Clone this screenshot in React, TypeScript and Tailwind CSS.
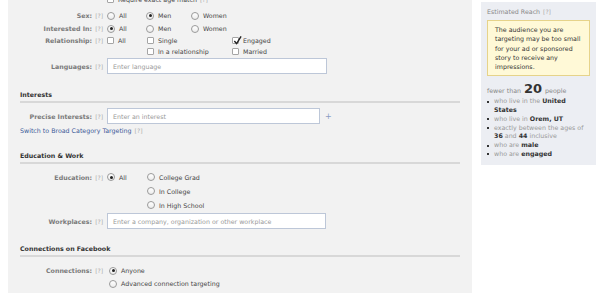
import type { ReactNode } from "react";

const FONT = { fontFamily: '"DejaVu Sans", "Liberation Sans", sans-serif' };

function Help() {
  return <span className="ml-[3px] text-[6px] text-[#aaa]">[?]</span>;
}

function Radio({ checked = false, label, w }: { checked?: boolean; label: string; w?: string }) {
  return (
    <span className={`flex items-center gap-[4px] ${w ?? ""}`}>
      <span className="flex h-[8px] w-[8px] shrink-0 items-center justify-center rounded-full border border-[#9a9a9a] bg-gradient-to-b from-white to-[#ececec]">
        {checked && <span className="h-[3px] w-[3px] rounded-full bg-[#222]" />}
      </span>
      <span className="text-[#444]">{label}</span>
    </span>
  );
}

function Check({ checked = false, label, w }: { checked?: boolean; label: string; w?: string }) {
  return (
    <span className={`flex items-center gap-[4px] ${w ?? ""}`}>
      <span className="relative flex h-[7px] w-[7px] shrink-0 items-center justify-center rounded-[1px] border border-[#a5a5a5] bg-white">
        {checked && (
          <svg viewBox="0 0 10 10" className="absolute -top-[2px] left-0 h-[9px] w-[9px]">
            <path d="M1.5 5.5 L4 8.5 L9 0.5" fill="none" stroke="#222" strokeWidth="1.6" />
          </svg>
        )}
      </span>
      <span className="text-[#444]">{label}</span>
    </span>
  );
}

function Label({ text }: { text: string }) {
  return (
    <div className="flex w-[87px] shrink-0 items-center justify-end pr-[4px]">
      <span className="font-semibold text-[#7a7a7a]">{text}</span>
      <Help />
    </div>
  );
}

function Row({ label, children, className }: { label?: string; children: ReactNode; className?: string }) {
  return (
    <div className={`flex h-[13px] items-center ${className ?? ""}`}>
      {label ? <Label text={label} /> : <div className="w-[87px] shrink-0" />}
      <div className="flex items-center">{children}</div>
    </div>
  );
}

function Input({ placeholder, w }: { placeholder: string; w: string }) {
  return (
    <div className={`flex h-[16px] items-center border border-[#bdc7d8] bg-white px-[5px] text-[#999] ${w}`}>
      {placeholder}
    </div>
  );
}

function Section({ title, className }: { title: string; className?: string }) {
  return (
    <div className={`border-b-2 border-[#d8d8d8] pb-[2px] font-bold text-[#333] ${className ?? ""}`}>{title}</div>
  );
}

function Bullet({ children }: { children: ReactNode }) {
  return (
    <li className="flex gap-[5px]">
      <span className="mt-[3.5px] h-[2px] w-[2px] shrink-0 bg-[#333]" />
      <span>{children}</span>
    </li>
  );
}

export default function App() {
  return (
    <div className="flex h-[293px] w-[600px] overflow-hidden bg-white text-[6.3px] leading-[9px]" style={FONT}>
      <div className="ml-[8px] flex h-[293px] w-[464px] flex-col bg-[#f2f2f2] px-[12px]">
        <Row className="-mt-[7px]">
          <Check label="Require exact age match" />
          <Help />
        </Row>
        <Row label="Sex:" className="mt-[3px]">
          <Radio label="All" w="w-[39px]" />
          <Radio checked label="Men" w="w-[45px]" />
          <Radio label="Women" />
        </Row>
        <Row label="Interested In:">
          <Radio checked label="All" w="w-[39px]" />
          <Radio label="Men" w="w-[45px]" />
          <Radio label="Women" />
        </Row>
        <div className="flex">
          <div className="flex h-[11px] items-center">
            <Label text="Relationship:" />
          </div>
          <div className="flex">
            <div className="flex h-[11px] w-[40px] items-center">
              <Check label="All" />
            </div>
            <div className="flex w-[85px] flex-col">
              <div className="flex h-[11px] items-center">
                <Check label="Single" />
              </div>
              <div className="flex h-[11px] items-center">
                <Check label="In a relationship" />
              </div>
            </div>
            <div className="flex flex-col">
              <div className="flex h-[11px] items-center">
                <Check checked label="Engaged" />
              </div>
              <div className="flex h-[11px] items-center">
                <Check label="Married" />
              </div>
            </div>
          </div>
        </div>
        <div className="mt-[1px] flex items-center">
          <Label text="Languages:" />
          <Input placeholder="Enter language" w="w-[220px]" />
        </div>

        <Section title="Interests" className="mt-[16px]" />
        <div className="mt-[5px] flex items-center">
          <Label text="Precise Interests:" />
          <Input placeholder="Enter an interest" w="w-[213px]" />
          <span className="ml-[5px] text-[8px] text-[#8a9cc2]">+</span>
        </div>
        <div className="mt-[2px] text-[#3b5998]">
          Switch to Broad Category Targeting
          <Help />
        </div>

        <Section title="Education & Work" className="mt-[16px]" />
        <div className="mt-[6px] flex">
          <div className="flex h-[14px] items-center">
            <Label text="Education:" />
          </div>
          <div className="flex h-[14px] w-[40px] items-center">
            <Radio checked label="All" />
          </div>
          <div className="flex flex-col">
            <div className="flex h-[14px] items-center">
              <Radio label="College Grad" />
            </div>
            <div className="flex h-[14px] items-center">
              <Radio label="In College" />
            </div>
            <div className="flex h-[14px] items-center">
              <Radio label="In High School" />
            </div>
          </div>
        </div>
        <div className="mt-[1px] flex items-center">
          <Label text="Workplaces:" />
          <Input placeholder="Enter a company, organization or other workplace" w="w-[219px]" />
        </div>

        <Section title="Connections on Facebook" className="mt-[15px]" />
        <div className="mt-[7px] flex">
          <div className="flex h-[13px] items-center">
            <Label text="Connections:" />
          </div>
          <div className="flex flex-col pl-[2px]">
            <div className="flex h-[13px] items-center">
              <Radio checked label="Anyone" />
            </div>
            <div className="flex h-[13px] items-center">
              <Radio label="Advanced connection targeting" />
            </div>
          </div>
        </div>
      </div>

      <div className="ml-[9px] mt-[2px] flex h-[163px] w-[115px] flex-col bg-[#eceef3] px-[6px] pt-[5px]">
        <div className="text-[#888]">
          Estimated Reach
          <Help />
        </div>
        <div className="mt-[4px] border border-[#e6d38a] bg-[#fff9d7] px-[7px] py-[4px] leading-[9.3px] text-[#333]">
          The audience you are targeting may be too small for your ad or sponsored story to receive any impressions.
        </div>
        <div className="mt-[6px] flex h-[14px] items-baseline gap-[3px] text-[#888]">
          <span>fewer than</span>
          <span className="text-[13px] font-bold leading-[13px] text-[#333]">20</span>
          <span>people</span>
        </div>
        <ul className="mt-[1px] flex flex-col leading-[8.7px] text-[#999]">
          <Bullet>
            who live in the <b className="text-[#333]">United States</b>
          </Bullet>
          <Bullet>
            who live in <b className="text-[#333]">Orem, UT</b>
          </Bullet>
          <Bullet>
            exactly between the ages of <b className="text-[#333]">36</b> and <b className="text-[#333]">44</b> inclusive
          </Bullet>
          <Bullet>
            who are <b className="text-[#333]">male</b>
          </Bullet>
          <Bullet>
            who are <b className="text-[#333]">engaged</b>
          </Bullet>
        </ul>
      </div>
    </div>
  );
}
